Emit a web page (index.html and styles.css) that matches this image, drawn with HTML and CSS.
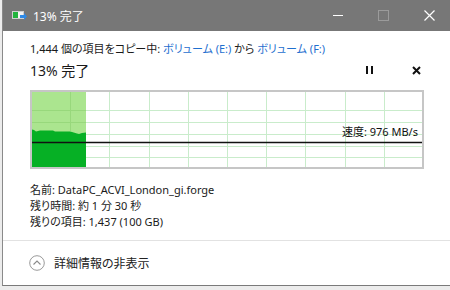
FILE: index.html
```html
<!DOCTYPE html>
<html lang="ja">
<head>
    <meta charset="UTF-8">
    <title>13% 完了</title>
    <link rel="stylesheet" href="styles.css">
</head>
<body>
    <div class="window">
        <div class="titlebar">
            <svg class="app-icon" width="15" height="11" viewBox="0 0 15 11">
                <rect x="0.5" y="1.5" width="11" height="7" fill="#f2f2f2" stroke="#cfcfcf"/>
                <rect x="1" y="2" width="5" height="6" fill="#21b33c"/>
                <path d="M8 5 h4 v-2 l3 3.5 l-3 3.5 v-2 h-4z" fill="#2d89e6"/>
            </svg>
            <div class="title">13% 完了</div>
            <div class="controls">
                <span class="ctl ctl-min"></span>
                <span class="ctl ctl-max"></span>
                <svg class="ctl-close" width="11" height="11" viewBox="0 0 11 11">
                    <path d="M0.5 0.5 L10.5 10.5 M10.5 0.5 L0.5 10.5" stroke="#fff" stroke-width="1.2"/>
                </svg>
            </div>
        </div>

        <div class="content">
            <div class="summary">1,444 個の項目をコピー中: <span class="link">ボリューム (E:)</span> から <span class="link">ボリューム (F:)</span></div>
            <div class="progress-row">
                <div class="percent">13% 完了</div>
                <div class="actions">
                    <span class="pause"><i></i><i></i></span>
                    <svg class="cancel" width="9" height="9" viewBox="0 0 9 9">
                        <path d="M1 1 L8 8 M8 1 L1 8" stroke="#111" stroke-width="2"/>
                    </svg>
                </div>
            </div>

            <div class="graph">
                <svg width="390" height="75" viewBox="0 0 390 75">
                    <rect x="0" y="0" width="54" height="75" fill="#abe58f"/>
                    <path d="M0 37.5 L2 38 L4 39.5 L8 38.5 L21 38.5 L23 39.5 L38 39.5 L40 40 L45 41.5 L47 42 L50 41 L54 40.5 L54 75 L0 75 Z" fill="#06b025"/>
                    <g stroke="#c9eccb" stroke-width="1">
                        <path d="M54 18.5 H390 M54 30.5 H390 M54 42.5 H390 M54 54.5 H390 M54 65.5 H390"/>
                        <path d="M77.5 0 V75 M117.5 0 V75 M156.5 0 V75 M195.5 0 V75 M234.5 0 V75 M273.5 0 V75 M313.5 0 V75 M352.5 0 V75"/>
                    </g>
                    <g stroke="#98d87c" stroke-width="1">
                        <path d="M0 18.5 H54 M0 30.5 H54"/>
                        <path d="M38.5 0 V39"/>
                    </g>
                    <path d="M0 50.5 H390" stroke="#111" stroke-width="1.3"/>
                </svg>
                <div class="speed">速度: 976 MB/s</div>
            </div>

            <div class="details">
                <div>名前: DataPC_ACVI_London_gi.forge</div>
                <div>残り時間: 約 1 分 30 秒</div>
                <div>残りの項目: 1,437 (100 GB)</div>
            </div>
        </div>

        <div class="footer">
            <svg class="toggle" width="16" height="16" viewBox="0 0 16 16">
                <circle cx="8" cy="8" r="7.3" fill="none" stroke="#9a9a9a" stroke-width="1"/>
                <path d="M4.5 9.5 L8 6 L11.5 9.5" fill="none" stroke="#8a8a8a" stroke-width="1.1"/>
            </svg>
            <span>詳細情報の非表示</span>
        </div>
    </div>
</body>
</html>
```

FILE: styles.css
```css
body {
    margin: 0;
    background: #ececec;
    font-family: "Noto Sans", "Noto Sans CJK JP", sans-serif;
    font-feature-settings: "palt";
    font-size: 11px;
    color: #1a1a1a;
}

.window {
    margin-left: 2px;
    height: 285px;
    background: #ffffff;
    border-left: 1px solid #8a8a8a;
    border-bottom: 1px solid #7a7a7a;
    overflow: hidden;
}

.titlebar {
    height: 31px;
    background: #777777;
    display: flex;
    align-items: center;
    color: #ffffff;
}

.app-icon {
    margin-left: 9px;
    margin-right: 6px;
}

.title {
    font-size: 12px;
    flex: 1;
}

.controls {
    display: flex;
    align-items: center;
    height: 100%;
}

.ctl-min {
    width: 10px;
    height: 1px;
    background: #ffffff;
    margin-right: 35px;
}

.ctl-max {
    width: 9px;
    height: 9px;
    border: 1px solid #9b9b9b;
    margin-right: 35px;
}

.ctl-close {
    margin-right: 15px;
}

.content {
    padding: 9px 27px 0 27px;
}

.summary {
    height: 18px;
    line-height: 18px;
}

.link {
    color: #1f6fcf;
}

.progress-row {
    display: flex;
    align-items: center;
    height: 24px;
}

.percent {
    flex: 1;
    font-size: 14px;
}

.actions {
    display: flex;
    align-items: center;
    margin-right: 2px;
}

.pause {
    display: flex;
    gap: 3px;
    margin-right: 39px;
}

.pause i {
    width: 2px;
    height: 8px;
    background: #111111;
}

.graph {
    position: relative;
    width: 390px;
    height: 75px;
    margin-top: 8px;
    border: 2px solid #c6c6c6;
}

.graph svg {
    display: block;
}

.speed {
    position: absolute;
    right: 4px;
    top: 32px;
    line-height: 16px;
    color: #111111;
}

.details {
    margin-top: 13px;
    line-height: 16px;
}

.footer {
    margin-top: 10px;
    border-top: 1px solid #e2e2e2;
    height: 43px;
    display: flex;
    align-items: center;
    padding-left: 26px;
    gap: 9px;
    font-size: 12px;
    color: #222222;
}
```
